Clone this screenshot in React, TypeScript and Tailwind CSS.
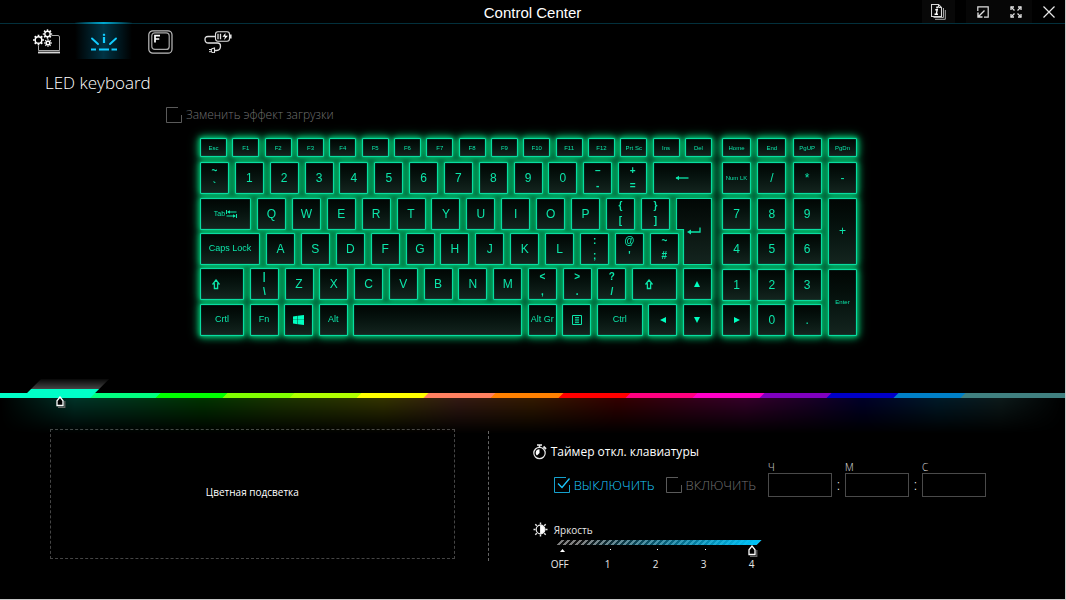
import { useState, type ReactNode } from 'react';

/* ---------- icons ---------- */

const Gear = ({ x, y, r }: { x: number; y: number; r: number }) => (
  <g stroke="#fff">
    <circle cx={x} cy={y} r={r} strokeWidth="1.400" />
    <circle cx={x} cy={y} r={r + 1.2} strokeWidth="1.600" pathLength={64} strokeDasharray="4 4" strokeDashoffset="2" />
  </g>
);

const SystemIcon = () => (
  <svg width="28" height="26" viewBox="0 0 28 26" fill="none" aria-hidden="true">
    <path d="M18.500 6.500H25Q26.500 6.500 26.500 8V21.500M5.500 16.500V21.500H26.500" stroke="#a8a8a8" />
    <path d="M5 23.500H27" stroke="#d8d8d8" strokeWidth="1.800" />
    <Gear x={5.500} y={11} r={3.300} />
    <Gear x={14.500} y={5} r={2.700} />
    <Gear x={15} y={14} r={1.800} />
  </svg>
);

const LedIcon = () => (
  <svg width="28" height="18" viewBox="0 0 28 18" fill="none" stroke="#12ccff" aria-hidden="true">
    <path d="M2 5.500L8 11M26 5.500L20 11" strokeWidth="1.900" strokeLinecap="round" />
    <path d="M14 4V10" strokeWidth="2.200" />
    <path d="M14 0.800V2.800" strokeWidth="2.200" />
    <path d="M1 16.500H6M9 16.500H19M21.500 16.500H27" strokeWidth="1.800" />
  </svg>
);

const FKeyIcon = () => (
  <svg width="25" height="24" viewBox="0 0 25 24" fill="none" aria-hidden="true">
    <rect x="0.800" y="0.800" width="23.200" height="22.400" rx="4" stroke="#bdbdbd" strokeWidth="1.200" />
    <rect x="3.800" y="2.800" width="17.400" height="16.600" rx="3" stroke="#a8a8a8" strokeWidth="1.200" />
    <path d="M7 12.500V5.700H12M7 9H11.300" stroke="#fff" strokeWidth="1.700" />
  </svg>
);

const PowerIcon = () => (
  <svg width="28" height="22" viewBox="0 0 28 22" fill="none" stroke="#e0e0e0" aria-hidden="true">
    <rect x="11.500" y="0.800" width="14" height="9.400" rx="2.500" strokeWidth="1.100" />
    <path d="M26.800 3.500V7.500" strokeWidth="1.600" />
    <path d="M14 2.800V8.200M16.500 2.800V8.200" strokeWidth="1.300" />
    <path d="M21.500 2L18.500 5.800H21L20 9L24 4.800H21.300Z" fill="#fff" stroke="none" />
    <path d="M11.500 5.500H4C1.500 5.500 1 7 1 8.500C1 11 2.500 12 4.500 12H13.500C15.500 12 16.500 13 16.500 15C16.500 18 15 19.500 12.500 19.500H11" strokeWidth="1.300" />
    <path d="M10.500 17V22L8 21.300Q6.500 19.500 8 17.700Z" strokeWidth="1.100" />
    <path d="M5 18.500H7.500M5 20.700H7.500" strokeWidth="1" />
  </svg>
);

const InfoDocIcon = () => (
  <svg width="15" height="16" viewBox="0 0 15 16" fill="none" stroke="#d8d8d8" aria-hidden="true">
    <path d="M0.500 0.500H7.500L10.500 3.500V12.500H0.500Z" strokeWidth="1.100" />
    <path d="M7.500 0.500V3.500H10.500" />
    <path d="M12.500 4V13.500H2.500M14.300 6V15.300H4" stroke="#a8a8a8" />
    <path d="M4.300 5.800H6.200L5.200 10.300M3.500 10.300H7" stroke="#fff" strokeWidth="1.400" />
    <path d="M6.200 2.500L6 4.300" stroke="#fff" strokeWidth="1.700" />
  </svg>
);

const MinimizeIcon = () => (
  <svg width="12" height="12" viewBox="0 0 12 12" fill="none" stroke="#e0e0e0" aria-hidden="true">
    <path d="M0.800 5V0.800H11.200V11.200H7" strokeWidth="1.200" />
    <path d="M7.500 4.500L1.500 10.500M1 6.500V11H5.500" strokeWidth="1.400" />
  </svg>
);

const ExpandIcon = () => (
  <svg width="12" height="12" viewBox="0 0 12 12" fill="none" stroke="#e0e0e0" strokeWidth="1.300" aria-hidden="true">
    <path d="M1 4V1H4M8 1H11V4M11 8V11H8M4 11H1V8" />
    <path d="M1 1L4.500 4.500M11 1L7.500 4.500M11 11L7.500 7.500M1 11L4.500 7.500" />
  </svg>
);

const CloseIcon = () => (
  <svg width="12" height="12" viewBox="0 0 12 12" fill="none" stroke="#e8e8e8" strokeWidth="1.200" aria-hidden="true">
    <path d="M0.500 0.500L11.500 11.500M11.500 0.500L0.500 11.500" />
  </svg>
);

const StopwatchIcon = () => (
  <svg width="14" height="16" viewBox="0 0 14 16" fill="none" stroke="#e8e8e8" aria-hidden="true">
    <circle cx="6.500" cy="9" r="5.700" strokeWidth="1.200" />
    <path d="M6.500 9V5.200A3.800 3.800 0 0 0 2.700 9Q3 11 4 11.500Z" fill="#fff" stroke="none" />
    <path d="M4 1H9M6.500 1V3" strokeWidth="1.600" />
    <path d="M10.500 2.500L13 5" strokeWidth="1.800" />
  </svg>
);

const BrightnessIcon = () => (
  <svg width="15" height="15" viewBox="0 0 15 15" fill="none" stroke="#e8e8e8" aria-hidden="true">
    <circle cx="7.500" cy="7.500" r="4.300" strokeWidth="1.200" />
    <path d="M7.500 3.200A4.300 4.300 0 0 1 7.500 11.800Z" fill="#fff" />
    <path d="M7.500 0.500V2.500M7.500 12.500V14.500M0.500 7.500H2.500M12.500 7.500H14.500M2.300 2.300L3.800 3.800M12.700 2.300L11.200 3.800M2.300 12.700L3.800 11.200M12.700 12.700L11.200 11.200" strokeWidth="1.400" />
  </svg>
);

const PointerIcon = () => (
  <svg width="10" height="12" viewBox="0 0 10 12" fill="none" aria-hidden="true">
    <path d="M2 11.300H8.800V5" stroke="#666" strokeWidth="1.200" />
    <path d="M1 9.500V4.800L4 1L7 4.800V9.500Z" fill="#000" stroke="#fff" strokeWidth="1.300" />
  </svg>
);

const ShiftGlyph = () => (
  <svg width="8" height="11" viewBox="0 0 8 11" fill="none" stroke="currentColor" aria-hidden="true">
    <path d="M4 1L7 4.800H5.600V9.500H2.400V4.800H1Z" strokeWidth="1.300" />
  </svg>
);

const TabGlyph = () => (
  <svg width="11" height="8" viewBox="0 0 11 8" fill="none" stroke="currentColor" aria-hidden="true">
    <path d="M0.500 0V4M2 2H10.500M10.500 4V8M0.500 6H9" />
    <path d="M1 2L4 0.200V3.800ZM10 6L7 4.200V7.800Z" fill="currentColor" stroke="none" />
  </svg>
);

const BackGlyph = () => (
  <svg width="14" height="6" viewBox="0 0 14 6" fill="none" stroke="currentColor" aria-hidden="true">
    <path d="M1 3H13.500" strokeWidth="1.300" />
    <path d="M0.500 3L4 0.800V5.200Z" fill="currentColor" stroke="none" />
  </svg>
);

const EnterGlyph = () => (
  <svg width="14" height="8" viewBox="0 0 14 8" fill="none" stroke="currentColor" aria-hidden="true">
    <path d="M2 5H13V0.500" strokeWidth="1.300" />
    <path d="M0 5L4 2.500V7.500Z" fill="currentColor" stroke="none" />
  </svg>
);

const WindowsGlyph = () => (
  <svg width="11" height="10" viewBox="0 0 11 10" fill="#00ffc0" aria-hidden="true">
    <path d="M0 1.500L4.600 0.800V4.700H0ZM5 0.700L11 0V4.700H5ZM0 5.100H4.600V9.200L0 8.500ZM5 5.100H11V10L5 9.300Z" />
  </svg>
);

const MenuGlyph = () => (
  <svg width="10" height="10" viewBox="0 0 10 10" fill="none" stroke="currentColor" aria-hidden="true">
    <path d="M0.500 0.500H9.500V9.500H0.500Z" />
    <path d="M3 2.500H7M3 4.200H7M3 5.900H7M3 7.600H7" strokeWidth="0.900" />
  </svg>
);

const Triangle = ({ turn }: { turn: number }) => (
  <svg width="6" height="6" viewBox="0 0 6 6" fill="#00ffc0" aria-hidden="true">
    <path d="M3 0L6 6H0Z" transform={`rotate(${turn} 3 3)`} />
  </svg>
);

/* ---------- keyboard ---------- */

type KeyProps = { label: string; children?: ReactNode; size?: string; className?: string };

function Key({ label, children, size = 'text-xs', className = 'w-[29px] h-8' }: KeyProps) {
  return (
    <button
      type="button"
      aria-label={label}
      className={`flex items-center justify-center whitespace-nowrap rounded-[1px] border border-[#08dca0] bg-linear-to-b from-[#010604] to-[#14251f] leading-none text-[#0ce6aa] shadow-[0_0_1px_#08dca0,inset_0_0_1px_#08dca0] ${size} ${className}`}
    >
      {children ?? label}
    </button>
  );
}

function DualKey({ top, bottom }: { top: string; bottom: string }) {
  return (
    <Key label={`${top} ${bottom}`} size="text-[10px]">
      <span className="flex h-full flex-col items-center justify-around font-bold">
        <span>{top}</span>
        <span>{bottom}</span>
      </span>
    </Key>
  );
}

const functionKeys = ['Esc', 'F1', 'F2', 'F3', 'F4', 'F5', 'F6', 'F7', 'F8', 'F9', 'F10', 'F11', 'F12', 'Prt Sc', 'Ins', 'Del'];
const letters = (row: string) => row.split('').map((c) => <Key key={c} label={c} />);

function MainBlock() {
  return (
    <div className="w-[512px]">
      <div className="mb-[5px] flex justify-between">
        {functionKeys.map((k) => (
          <Key key={k} label={k} size="text-[6px]" className="h-[19px] w-[27px]" />
        ))}
      </div>
      <div className="flex h-[174px] flex-col justify-between">
        <div className="flex justify-between">
          <DualKey top="~" bottom="`" />
          {letters('1234567890')}
          <DualKey top="–" bottom="-" />
          <DualKey top="+" bottom="=" />
          <Key label="Backspace" className="h-8 w-[59px]"><BackGlyph /></Key>
        </div>
        <div className="relative flex flex-col gap-[3px]">
          <div className="flex justify-between pr-[42px]">
            <Key label="Tab" size="text-[7px]" className="h-8 w-[51px] gap-px">
              <span>Tab</span>
              <TabGlyph />
            </Key>
            {letters('QWERTYUIOP')}
            <DualKey top="{" bottom="[" />
            <DualKey top="}" bottom="]" />
          </div>
          <div className="flex justify-between pr-[33px]">
            <Key label="Caps Lock" size="text-[9px]" className="h-8 w-[60px]" />
            {letters('ASDFGHJKL')}
            <DualKey top=":" bottom=";" />
            <DualKey top="@" bottom="'" />
            <DualKey top="~" bottom="#" />
          </div>
          <button type="button" aria-label="Enter" className="absolute inset-y-0 right-0 flex w-9 items-center justify-center text-[#0ce6aa]">
            <svg viewBox="0 0 36 67" className="absolute inset-0 size-full" aria-hidden="true">
              <defs>
                <linearGradient id="enter-fill" x1="0" y1="0" x2="0" y2="1">
                  <stop offset="0" stopColor="#010604" />
                  <stop offset="1" stopColor="#14251f" />
                </linearGradient>
              </defs>
              <path d="M0.500 0.500H35.500V66.500H7.500V31.500H0.500Z" fill="url(#enter-fill)" stroke="#08dca0" strokeWidth="1.200" />
            </svg>
            <span className="relative"><EnterGlyph /></span>
          </button>
        </div>
        <div className="flex justify-between">
          <Key label="Left Shift" className="h-8 w-11 pr-3"><ShiftGlyph /></Key>
          <DualKey top="|" bottom="\" />
          {letters('ZXCVBNM')}
          <DualKey top="<" bottom="," />
          <DualKey top=">" bottom="." />
          <DualKey top="?" bottom="/" />
          <Key label="Right Shift" className="h-8 w-[45px] pr-3"><ShiftGlyph /></Key>
          <Key label="Up"><Triangle turn={0} /></Key>
        </div>
        <div className="flex justify-between">
          <Key label="Crtl" size="text-[9px]" className="h-8 w-11" />
          <Key label="Fn" size="text-[9px]" />
          <Key label="Windows"><WindowsGlyph /></Key>
          <Key label="Alt" size="text-[9px]" />
          <Key label="Space" className="h-8 w-[169px]"><span /></Key>
          <Key label="Alt Gr" size="text-[9px]" />
          <Key label="Menu"><MenuGlyph /></Key>
          <Key label="Ctrl" size="text-[9px]" className="h-8 w-[46px]" />
          <Key label="Left"><Triangle turn={270} /></Key>
          <Key label="Down"><Triangle turn={180} /></Key>
        </div>
      </div>
    </div>
  );
}

function NumberPad() {
  return (
    <div className="w-[135px]">
      <div className="mb-[5px] flex justify-between">
        {['Home', 'End', 'PgUP', 'PgDn'].map((k) => (
          <Key key={k} label={k} size="text-[6px]" className="h-[19px] w-[29px]" />
        ))}
      </div>
      <div className="grid h-[174px] grid-cols-[repeat(4,29px)] content-between justify-between">
        <Key label="Num LK" size="text-[6px]" />
        {letters('/*-789')}
        <Key label="+" className="row-span-2 w-[29px]" />
        {letters('456123')}
        <Key label="Enter" size="text-[6px]" className="row-span-2 w-[29px]" />
        <Key label="Right"><Triangle turn={90} /></Key>
        {letters('0.')}
      </div>
    </div>
  );
}

/* ---------- controls ---------- */

type CheckProps = { label: string; checked: boolean; onChange: () => void };

function Check({ label, checked, onChange }: CheckProps) {
  return (
    <label className={`flex items-center gap-1 leading-4 ${checked ? 'text-[#1cc8ff]' : 'text-[#707070]'}`}>
      <span className="relative size-4">
        <input type="checkbox" checked={checked} onChange={onChange} className="absolute inset-0 size-full appearance-none" />
        <svg width="16" height="16" viewBox="0 0 16 16" fill="none" stroke="currentColor" className="pointer-events-none" aria-hidden="true">
          <path d="M12 0.500H0.500V15.500H15.500V8" strokeOpacity="0.800" />
          {checked && <path d="M4 6.500L8 10.500L15.500 1.500" strokeWidth="1.300" />}
        </svg>
      </span>
      <span>{label}</span>
    </label>
  );
}

function TimeField({ label }: { label: string }) {
  return (
    <label className="flex flex-col text-[10px] leading-3 text-[#e0e0e0]">
      {label}
      <input type="text" className="h-6 w-16 border border-[#4a4a4a] bg-black px-2 text-center outline-none" />
    </label>
  );
}

const segments = [
  'bg-[#00ff80]', 'bg-[#00ff00]', 'bg-[#80ff00]', 'bg-[#b0ff00]', 'bg-[#ffff00]', 'bg-[#ff8060]', 'bg-[#ff8000]',
  'bg-[#ff0000]', 'bg-[#ff0080]', 'bg-[#ff00c8]', 'bg-[#8000c0]', 'bg-[#0000c8]', 'bg-[#0080c8]', 'bg-[#408080]',
];

function ColorBar() {
  return (
    <div className="relative h-[19px]">
      <div className="pointer-events-none absolute inset-x-0 top-[19px] h-9 bg-[linear-gradient(to_right,#000,#00ffc8_7%,#00ff80_12%,#00ff00_19%,#80ff00_26%,#ffff00_36%,#ff8060_43%,#ff8000_50%,#f00_58%,#ff0080_65%,#ff00c8_70%,#8000c0_76%,#0000c8_81%,#0080c8_88%,#408080_94%,#000)] opacity-20 [mask-image:linear-gradient(to_bottom,black,transparent)]" />
      <div className="flex h-full items-end overflow-hidden">
        <div className="h-[5px] grow-[28] basis-0 bg-[#00ffc8]" />
        <div className="relative z-10 h-full grow-[65] basis-0">
          <button
            type="button"
            aria-label="Color 1"
            className="absolute inset-y-0 -left-px -right-4 bg-[linear-gradient(to_bottom,#080808_0,#444_10px,#00ffc8_10px)] [clip-path:polygon(14px_0,100%_0,calc(100%_-_19px)_100%,0_100%,0_14px)]"
          />
        </div>
        {segments.map((bg, i) => (
          <button key={bg} type="button" aria-label={`Color ${i + 2}`} className={`-ml-0.5 h-[5px] grow-[67] basis-0.5 -skew-x-[45deg] ${bg}`} />
        ))}
        <div className="-ml-1 h-[5px] grow-[33] basis-1 bg-[#408080]" />
      </div>
      <span className="absolute left-14 top-[17px] z-20"><PointerIcon /></span>
    </div>
  );
}

function BrightnessSlider() {
  const [level, setLevel] = useState(4);
  return (
    <div className="relative w-[200px]">
      <div className="h-[5px] -skew-x-[45deg] bg-[repeating-linear-gradient(90deg,#808080_0_3px,#101010_3px_6px)]">
        <div className="h-full bg-linear-to-r from-[#00c4fa]/0 from-10% via-[#00a8d8]/60 via-60% to-[#00c4fa]" />
      </div>
      <div className="mt-1 flex h-3 items-start justify-between pr-0.5 text-white">
        {[0, 1, 2, 3, 4].map((n) => (
          <span key={n} className="flex w-2 justify-center">
            {n === level ? (
              <span className="-mt-1"><PointerIcon /></span>
            ) : n === 0 ? (
              <svg width="5" height="3" viewBox="0 0 5 3" fill="#fff" aria-hidden="true"><path d="M2.500 0L5 3H0Z" /></svg>
            ) : (
              <span className="size-px bg-white" />
            )}
          </span>
        ))}
      </div>
      <div className="-ml-[23px] -mt-[3px] grid w-60 grid-cols-5 text-center text-[10px] leading-3 text-[#e8e8e8]">
        {['OFF', '1', '2', '3', '4'].map((t) => (
          <span key={t}>{t}</span>
        ))}
      </div>
      <input
        id="brightness"
        type="range"
        min={0}
        max={4}
        value={level}
        onChange={(e) => setLevel(Number(e.target.value))}
        className="absolute inset-x-0 top-0 h-4 w-full opacity-0"
      />
    </div>
  );
}

/* ---------- page ---------- */

const tabs = [
  { name: 'System', icon: <SystemIcon /> },
  { name: 'LED keyboard', icon: <LedIcon /> },
  { name: 'Function keys', icon: <FKeyIcon /> },
  { name: 'Power', icon: <PowerIcon /> },
];

export default function App() {
  const [bootEffect, setBootEffect] = useState(false);
  const [timerOn, setTimerOn] = useState(false);

  return (
    <div className="flex min-h-screen flex-col border-b border-r border-[#c8c8c8] bg-black font-['Open_Sans',sans-serif] text-white">
      <header className="grid h-6 grid-cols-[1fr_auto_1fr] items-center border-b border-[#03303c]">
        <span />
        <h1 className="pt-0.5 font-['Liberation_Sans',sans-serif] text-[15px] leading-5">Control Center</h1>
        <div className="flex h-full justify-end">
          <button type="button" aria-label="Information" className="mr-[11px] flex w-[33px] items-center justify-center bg-[#080808]"><InfoDocIcon /></button>
          <button type="button" aria-label="Minimize" className="flex w-[33px] items-center justify-center bg-[#060606]"><MinimizeIcon /></button>
          <button type="button" aria-label="Full screen" className="flex w-[33px] items-center justify-center bg-[#060606]"><ExpandIcon /></button>
          <button type="button" aria-label="Close" className="flex w-[33px] items-center justify-center"><CloseIcon /></button>
        </div>
      </header>

      <nav className="flex h-[35px] pl-[18px]">
        {tabs.map((t, i) => (
          <button key={t.name} type="button" aria-label={t.name} className="relative flex w-[57px] items-center justify-center">
            {i === 1 && (
              <span className="absolute inset-x-0 -top-0.5 bottom-0 border-t-2 bg-linear-to-r from-transparent via-[#003344] to-transparent [border-image:linear-gradient(to_right,transparent,#00a8d0,transparent)_1]" />
            )}
            <span className="relative">{t.icon}</span>
          </button>
        ))}
      </nav>

      <h2 className="flex h-12 items-center pl-[45px] text-[17px] font-light">LED keyboard</h2>

      <main className="flex flex-1 flex-col">
        <div className="mx-auto w-[657px] -translate-x-1">
          <div className="-ml-[34px] mb-[15px] flex h-4 items-center text-xs font-light">
            <Check label="Заменить эффект загрузки" checked={bootEffect} onChange={() => setBootEffect(!bootEffect)} />
          </div>
          <div className="flex justify-between font-['Liberation_Sans',sans-serif] text-shadow-[0_0_1px_#0ce6aa] [filter:drop-shadow(0_0_2px_#00b068)_drop-shadow(0_0_3px_#00a860)_drop-shadow(0_0_4px_#006038)]">
            <MainBlock />
            <NumberPad />
          </div>
        </div>

        <div className="mt-[43px]">
          <ColorBar />
        </div>

        <div className="mt-[31px] flex">
          <button type="button" className="ml-[50px] h-[130px] w-[38%] border border-dashed border-[#454545] pb-1 text-[10px]">
            Цветная подсветка
          </button>
          <div className="ml-[33px] mt-0.5 h-[130px] border-l border-dashed border-[#666]" />

          <section className="ml-11 flex-1 pt-[15px]">
            <h3 className="flex h-4 items-center gap-1 text-xs">
              <StopwatchIcon />
              Таймер откл. клавиатуры
            </h3>
            <div className="ml-[21px] flex h-[37px] items-end gap-3 text-[13px] font-light">
              <div className="flex gap-[11px] pb-1">
                <Check label="ВЫКЛЮЧИТЬ" checked={!timerOn} onChange={() => setTimerOn(false)} />
                <Check label="ВКЛЮЧИТЬ" checked={timerOn} onChange={() => setTimerOn(true)} />
              </div>
              <div className="flex items-end">
                <TimeField label="Ч" />
                <span className="w-[13px] text-center text-sm leading-6">:</span>
                <TimeField label="М" />
                <span className="w-[13px] text-center text-sm leading-6">:</span>
                <TimeField label="С" />
              </div>
            </div>
            <label htmlFor="brightness" className="mt-[25px] flex h-[15px] items-center gap-1.5 text-[10px] leading-3 text-[#e8e8e8]">
              <BrightnessIcon />
              Яркость
            </label>
            <div className="ml-[26px] mt-[3px]">
              <BrightnessSlider />
            </div>
          </section>
        </div>
      </main>
    </div>
  );
}
